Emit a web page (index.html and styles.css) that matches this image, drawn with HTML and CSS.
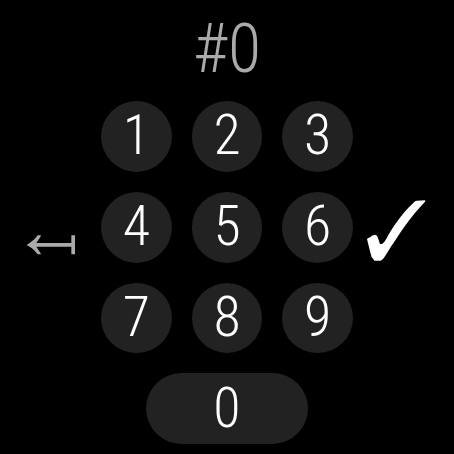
FILE: index.html
```
<!DOCTYPE html>
<html lang="en">
<head>
<meta charset="utf-8">
<title>Keypad</title>
<link rel="stylesheet" href="styles.css">
</head>
<body>
<main class="pad">
  <output class="entry">#0</output>
  <button class="side back" type="button" aria-label="Delete">
    <svg width="48" height="20" viewBox="36 44 144 60"><path d="M36 73C47 66 57 59 64 50L68 45H78L76 50L64 68H169V45H180V102H169V79H64L76 97L78 102H68L64 97C57 88 47 80 36 75Z"/></svg>
  </button>
  <div class="keys">
    <button class="key" type="button">1</button>
    <button class="key" type="button">2</button>
    <button class="key" type="button">3</button>
    <button class="key" type="button">4</button>
    <button class="key" type="button">5</button>
    <button class="key" type="button">6</button>
    <button class="key" type="button">7</button>
    <button class="key" type="button">8</button>
    <button class="key" type="button">9</button>
    <button class="key zero" type="button">0</button>
  </div>
  <button class="side ok" type="button" aria-label="Confirm">
    <svg width="59" height="61" viewBox="36 31 177 183"><path d="M36 148L41 144L46 143L50 138L56 137L60 135L66 138L70 148L75 163H81Q88 159 94 147C110 118 138 74 174 41L180 35L185 33L211 32L210 36L201 46C169 80 142 118 117 158C107 172 98 187 90 200L84 208L77 213H58L55 208L50 203L45 185Z"/></svg>
  </button>
</main>
</body>
</html>
```
FILE: styles.css
```
body {
  margin: 0;
  background: #000;
  color: #fff;
  font-family: "Roboto Condensed", Roboto, sans-serif;
  font-weight: 300;
}
.pad {
  display: grid;
  grid-template-columns: 1fr 252px 1fr;
}
.entry {
  grid-column: 1 / -1;
  height: 101px;
  line-height: 98px;
  font-size: 68px;
  text-align: center;
  color: #aaa;
}
.keys {
  display: grid;
  grid-template-columns: repeat(3, 1fr);
  grid-template-rows: repeat(4, 1fr);
  height: 343px;
  gap: 20px;
}
.key {
  padding: 0 0 2px;
  border: 0;
  border-radius: 36px;
  background: #222;
  color: inherit;
  font: inherit;
  font-size: 56px;
  line-height: 64px;
}
.zero {
  grid-column: 1 / -1;
  justify-self: center;
  width: 162px;
}
.side {
  display: flex;
  align-items: center;
  justify-content: center;
  box-sizing: border-box;
  height: 252px;
  padding: 0;
  border: 0;
  background: none;
  fill: #fff;
}
.back {
  padding-top: 36px;
  fill: #aaa;
}
.ok {
  padding: 6px 14px 0 0;
}
```
